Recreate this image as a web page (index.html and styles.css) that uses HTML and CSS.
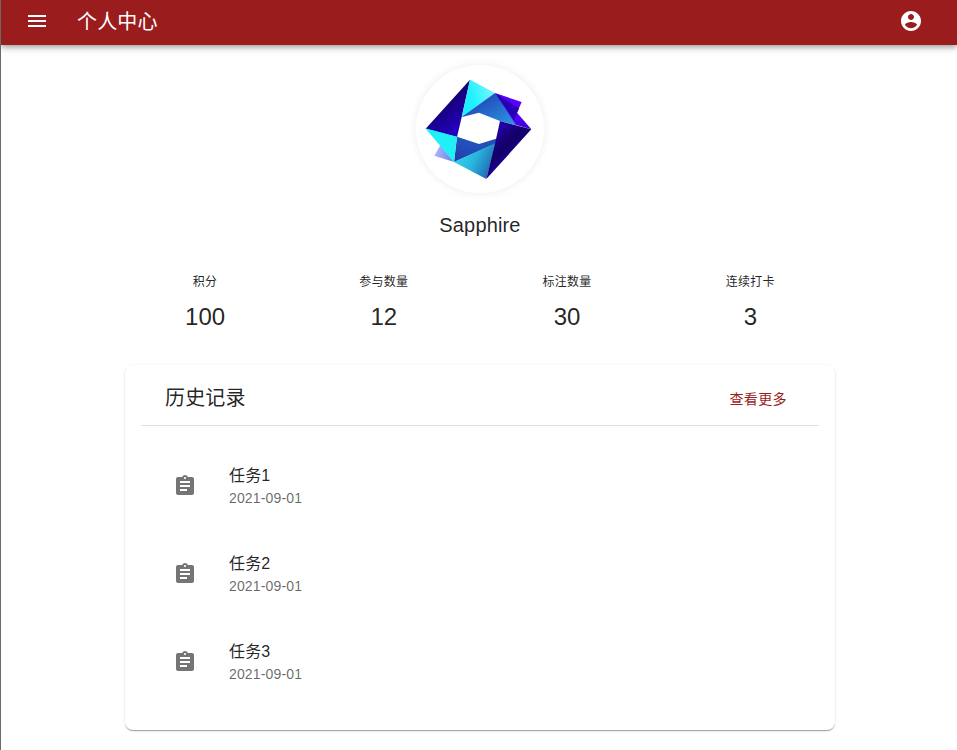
FILE: index.html
```html
<!DOCTYPE html>
<html lang="zh-CN">
<head>
<meta charset="utf-8">
<title>个人中心</title>
<link rel="stylesheet" href="styles.css">
</head>
<body>
<header class="bar">
  <svg class="icon" viewBox="0 0 24 24"><path d="M3 18h18v-2H3v2zm0-5h18v-2H3v2zm0-7v2h18V6H3z"/></svg>
  <h1 class="bar-title">个人中心</h1>
  <svg class="icon" viewBox="0 0 24 24"><path d="M12 2C6.480 2 2 6.480 2 12s4.480 10 10 10 10-4.480 10-10S17.520 2 12 2zm0 3c1.660 0 3 1.340 3 3s-1.340 3-3 3-3-1.340-3-3 1.340-3 3-3zm0 14.200c-2.500 0-4.710-1.280-6-3.220.030-1.990 4-3.080 6-3.080 1.990 0 5.970 1.090 6 3.080-1.290 1.940-3.500 3.220-6 3.220z"/></svg>
</header>
<main class="page">
  <div class="avatar">
    <svg viewBox="18 15 384 384">
      <defs>
        <linearGradient id="navy" x1="0" y1="0" x2="0.6" y2="1"><stop offset="0.4" stop-color="#14006a"/><stop offset="1" stop-color="#2400c4"/></linearGradient>
        <linearGradient id="navy-right" gradientUnits="userSpaceOnUse" x1="250" y1="185" x2="345" y2="290"><stop offset="0" stop-color="#2a00c8"/><stop offset="0.5" stop-color="#14006a"/><stop offset="0.6" stop-color="#14006a"/><stop offset="1" stop-color="#2900c0"/></linearGradient>
        <linearGradient id="cyan" x1="0.3" y1="0.5" x2="1" y2="0.2"><stop offset="0" stop-color="#1ff0ff"/><stop offset="1" stop-color="#7dfaff"/></linearGradient>
        <linearGradient id="blue" x1="0.3" y1="0.3" x2="1" y2="1"><stop offset="0" stop-color="#214fbe"/><stop offset="1" stop-color="#2a9be0"/></linearGradient>
        <linearGradient id="blue-low" x1="0" y1="1" x2="0.6" y2="0"><stop offset="0" stop-color="#2238a5"/><stop offset="0.6" stop-color="#2250bb"/></linearGradient>
        <linearGradient id="aqua" gradientUnits="userSpaceOnUse" x1="150" y1="300" x2="240" y2="345"><stop offset="0" stop-color="#2dcaea"/><stop offset="0.4" stop-color="#28b4dc"/><stop offset="1" stop-color="#2065b0"/></linearGradient>
        <linearGradient id="pale" x1="0" y1="0.5" x2="1" y2="0.8"><stop offset="0" stop-color="#a9b5ff"/><stop offset="1" stop-color="#6c82df"/></linearGradient>
        <linearGradient id="violet" x1="0" y1="0" x2="1" y2="1"><stop offset="0.5" stop-color="#5a00ff"/><stop offset="1" stop-color="#3c00d4"/></linearGradient>
      </defs>
      <path fill="url(#violet)" d="M255 99L335 126L321 158L364 208L300 190Z"/>
      <path fill="#2800b4" d="M255 99L327 145L312 180Z"/>
      <path fill="url(#pale)" d="M91 256L73 287L132 306Z"/>
      <path fill="url(#navy)" d="M180 59L47 206L141 231L155 172Z"/>
      <path fill="url(#cyan)" d="M180 59L255 99L155 172Z"/>
      <path fill="url(#blue)" d="M255 99L154 172L207 158L270 183L318 195Z"/>
      <path fill="url(#blue-low)" d="M141 230L207 252L263 235L256 251L132 306Z"/>
      <path fill="url(#aqua)" d="M257 249L229 357L132 306Z"/>
      <path fill="#1ff0f5" d="M46 205L141 230L132 306Z"/>
      <path fill="url(#navy-right)" d="M270 183L364 208L229 357L255 251Z"/>
    </svg>
  </div>
  <h2 class="name">Sapphire</h2>
  <section class="stats">
    <div class="stat"><span class="label">积分</span><span class="value">100</span></div>
    <div class="stat"><span class="label">参与数量</span><span class="value">12</span></div>
    <div class="stat"><span class="label">标注数量</span><span class="value">30</span></div>
    <div class="stat"><span class="label">连续打卡</span><span class="value">3</span></div>
  </section>
  <section class="card">
    <div class="card-head"><h3 class="card-title">历史记录</h3><a class="more">查看更多</a></div>
    <ul class="list">
      <li class="item"><svg class="icon" viewBox="0 0 24 24"><path d="M19 3h-4.180C14.400 1.840 13.300 1 12 1c-1.300 0-2.400.840-2.820 2H5c-1.100 0-2 .9-2 2v14c0 1.100.9 2 2 2h14c1.100 0 2-.9 2-2V5c0-1.100-.9-2-2-2zm-7 0c.550 0 1 .450 1 1s-.450 1-1 1-1-.450-1-1 .450-1 1-1zm2 14H7v-2h7v2zm3-4H7v-2h10v2zm0-4H7V7h10v2z"/></svg><div><p class="task">任务1</p><p class="date">2021-09-01</p></div></li>
      <li class="item"><svg class="icon" viewBox="0 0 24 24"><path d="M19 3h-4.180C14.400 1.840 13.300 1 12 1c-1.300 0-2.400.840-2.820 2H5c-1.100 0-2 .9-2 2v14c0 1.100.9 2 2 2h14c1.100 0 2-.9 2-2V5c0-1.100-.9-2-2-2zm-7 0c.550 0 1 .450 1 1s-.450 1-1 1-1-.450-1-1 .450-1 1-1zm2 14H7v-2h7v2zm3-4H7v-2h10v2zm0-4H7V7h10v2z"/></svg><div><p class="task">任务2</p><p class="date">2021-09-01</p></div></li>
      <li class="item"><svg class="icon" viewBox="0 0 24 24"><path d="M19 3h-4.180C14.400 1.840 13.300 1 12 1c-1.300 0-2.400.840-2.820 2H5c-1.100 0-2 .9-2 2v14c0 1.100.9 2 2 2h14c1.100 0 2-.9 2-2V5c0-1.100-.9-2-2-2zm-7 0c.550 0 1 .450 1 1s-.450 1-1 1-1-.450-1-1 .450-1 1-1zm2 14H7v-2h7v2zm3-4H7v-2h10v2zm0-4H7V7h10v2z"/></svg><div><p class="task">任务3</p><p class="date">2021-09-01</p></div></li>
    </ul>
  </section>
</main>
</body>
</html>
```

FILE: styles.css
```css
* { box-sizing: border-box; }
body {
  margin: 0;
  height: 750px;
  overflow: hidden;
  border-left: 1px solid #6b6b6b;
  background: #fff;
  color: rgba(0, 0, 0, 0.87);
  font-family: "Liberation Sans", "Noto Sans CJK SC", sans-serif;
}
h1, h2, h3, p, ul { margin: 0; padding: 0; font-weight: 400; }
.icon { display: block; width: 24px; height: 24px; fill: currentColor; flex: none; }
.bar {
  height: 45px;
  padding: 0 34px 3px 24px;
  display: flex;
  align-items: center;
  background: #9b1c1c;
  color: #fff;
  box-shadow: 0 2px 4px -1px rgba(0,0,0,.2), 0 4px 5px rgba(0,0,0,.14), 0 1px 10px rgba(0,0,0,.12);
}
.bar-title { flex: 1; margin-left: 28px; padding-top: 1px; font-size: 20px; line-height: 32px; letter-spacing: .15px; }
.page { display: flex; flex-direction: column; align-items: center; padding: 20px 0 0 2px; }
.avatar {
  width: 128px;
  height: 128px;
  border-radius: 50%;
  overflow: hidden;
  box-shadow: 0 0 10px rgba(0,0,0,.08);
}
.avatar svg { display: block; width: 128px; height: 128px; }
.name { margin-top: 16px; font-size: 20px; line-height: 32px; letter-spacing: .15px; }
.stats { width: 724px; margin-top: 31px; display: flex; justify-content: space-around; }
.stat { display: flex; flex-direction: column; align-items: center; }
.label { font-size: 12px; line-height: 20px; letter-spacing: .3px; }
.value { margin-top: 9px; font-size: 24px; line-height: 32px; }
.card {
  width: 710px;
  height: 365px;
  margin-top: 32px;
  padding: 16px;
  border-radius: 8px;
  box-shadow: 0 2px 1px -1px rgba(0,0,0,.2), 0 1px 1px rgba(0,0,0,.14), 0 1px 3px rgba(0,0,0,.12);
}
.card-head {
  height: 45px;
  padding: 0 32px 12px 24px;
  display: flex;
  align-items: center;
  justify-content: space-between;
  border-bottom: 1px solid #e0e0e0;
}
.card-title { padding-top: 1px; font-size: 20px; line-height: 32px; letter-spacing: .15px; }
.more { margin-top: 3px; font-size: 14px; line-height: 24px; letter-spacing: .4px; color: #9b1c1c; }
.list { padding-top: 16px; list-style: none; }
.item { height: 88px; padding-left: 32px; display: flex; align-items: center; gap: 32px; }
.item .icon { color: #757575; }
.task { font-size: 16px; line-height: 24px; letter-spacing: .15px; }
.date { font-size: 14px; line-height: 20px; letter-spacing: .15px; color: rgba(0,0,0,.6); }
```
